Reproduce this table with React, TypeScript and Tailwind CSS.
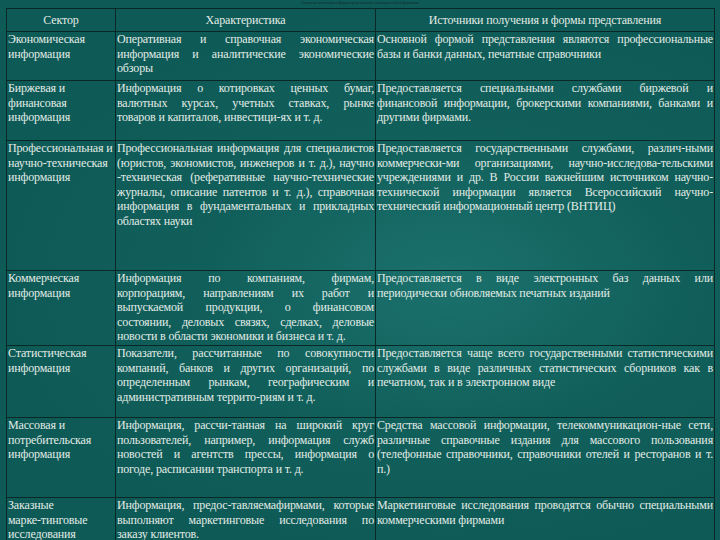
type Row = {
  sector: string[];
  about: string[];
  sources: string[];
  height: string;
};

const rows: Row[] = [
  {
    sector: ["Экономическая", "информация"],
    about: ["Оперативная и справочная экономическая", "информация и аналитические экономические", "обзоры"],
    sources: ["Основной формой представления являются профессиональные", "базы и банки данных, печатные справочники"],
    height: "h-[49px]",
  },
  {
    sector: ["Биржевая и", "финансовая", "информация"],
    about: ["Информация о котировках ценных бумаг,", "валютных курсах, учетных ставках, рынке", "товаров и капиталов, инвестици-ях и т. д."],
    sources: [
      "Предоставляется специальными службами биржевой и",
      "финансовой информации, брокерскими компаниями, банками и",
      "другими фирмами.",
    ],
    height: "h-[60px]",
  },
  {
    sector: ["Профессиональная и", "научно-техническая", "информация"],
    about: [
      "Профессиональная информация для специалистов",
      "(юристов, экономистов, инженеров и т. д.), научно",
      "-техническая (реферативные научно-технические",
      "журналы, описание патентов и т. д.), справочная",
      "информация в фундаментальных и прикладных",
      "областях науки",
    ],
    sources: [
      "Предоставляется государственными службами, различ-ными",
      "коммерчески-ми организациями, научно-исследова-тельскими",
      "учреждениями и др. В России важнейшим источником научно-",
      "технической информации является Всероссийский научно-",
      "технический информационный центр (ВНТИЦ)",
    ],
    height: "h-[130px]",
  },
  {
    sector: ["Коммерческая", "информация"],
    about: [
      "Информация по компаниям, фирмам,",
      "корпорациям, направлениям их работ и",
      "выпускаемой продукции, о финансовом",
      "состоянии, деловых связях, сделках, деловые",
      "новости в области экономики и бизнеса и т. д.",
    ],
    sources: ["Предоставляется в виде электронных баз данных или", "периодически обновляемых печатных изданий"],
    height: "h-[75px]",
  },
  {
    sector: ["Статистическая", "информация"],
    about: [
      "Показатели, рассчитанные по совокупности",
      "компаний, банков и других организаций, по",
      "определенным рынкам, географическим и",
      "административным террито-риям и т. д.",
    ],
    sources: [
      "Предоставляется чаще всего государственными статистическими",
      "службами в виде различных статистических сборников как в",
      "печатном, так и в электронном виде",
    ],
    height: "h-[72px]",
  },
  {
    sector: ["Массовая и", "потребительская", "информация"],
    about: [
      "Информация, рассчи-танная на широкий круг",
      "пользователей, например, информация служб",
      "новостей и агентств прессы, информация о",
      "погоде, расписании транспорта и т. д.",
    ],
    sources: [
      "Средства массовой информации, телекоммуникацион-ные сети,",
      "различные справочные издания для массового пользования",
      "(телефонные справочники, справочники отелей и ресторанов и т.",
      "п.)",
    ],
    height: "h-[80px]",
  },
  {
    sector: ["Заказные", "марке-тинговые", "исследования"],
    about: ["Информация, предос-тавляемафирмами, которые", "выполняют маркетинговые исследования по", "заказу клиентов."],
    sources: ["Маркетинговые исследования проводятся обычно специальными", "коммерческими фирмами"],
    height: "h-[60px]",
  },
];

function Lines({ lines, justify }: { lines: string[]; justify?: boolean }) {
  return (
    <>
      {lines.map((line, i) => (
        <div
          key={i}
          className={
            justify && i < lines.length - 1
              ? "whitespace-nowrap text-justify [text-align-last:justify]"
              : "whitespace-nowrap text-left"
          }
        >
          {line}
        </div>
      ))}
    </>
  );
}

export default function App() {
  const cell = "overflow-hidden border border-[#0a2826] align-top px-[1px] pt-0";
  return (
    <div className="h-[540px] w-[720px] overflow-hidden bg-[#0e5e5a] bg-[radial-gradient(ellipse_at_62%_52%,#1b716c_0%,#115f5b_38%,#0e5a56_70%)] font-['Liberation_Serif',serif] text-[12px] leading-[14.5px] tracking-[-0.15px] text-[#e2ece6]">
      <div className="flex h-[8px] justify-center">
        <span className="text-[4px] leading-[5px] text-[#10302e]">Основные источники и формы представления экономической информации</span>
      </div>
      <div className="px-[6px]">
        <table className="w-[708px] table-fixed border-collapse">
          <colgroup>
            <col className="w-[109px]" />
            <col className="w-[260px]" />
            <col className="w-[339px]" />
          </colgroup>
          <thead>
            <tr className="h-[23px]">
              <th className="border border-[#0a2826] text-center align-middle font-normal">Сектор</th>
              <th className="border border-[#0a2826] text-center align-middle font-normal">Характеристика</th>
              <th className="border border-[#0a2826] text-center align-middle font-normal">
                Источники получения и формы представления
              </th>
            </tr>
          </thead>
          <tbody>
            {rows.map((row, i) => (
              <tr key={i} className={row.height}>
                <td className={cell}>
                  <Lines lines={row.sector} />
                </td>
                <td className={cell}>
                  <Lines lines={row.about} justify />
                </td>
                <td className={cell}>
                  <Lines lines={row.sources} justify />
                </td>
              </tr>
            ))}
          </tbody>
        </table>
      </div>
    </div>
  );
}
